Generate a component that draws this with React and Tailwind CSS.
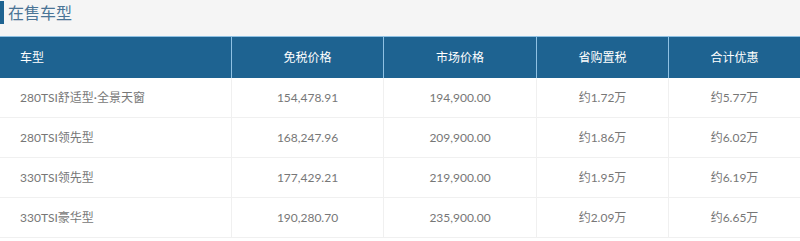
import React from 'react';

const rows = [
  ['280TSI舒适型·全景天窗', '154,478.91', '194,900.00', '约1.72万', '约5.77万'],
  ['280TSI领先型', '168,247.96', '209,900.00', '约1.86万', '约6.02万'],
  ['330TSI领先型', '177,429.21', '219,900.00', '约1.95万', '约6.19万'],
  ['330TSI豪华型', '190,280.70', '235,900.00', '约2.09万', '约6.65万'],
];

const cols = ['w-[232px]', 'w-[152px]', 'w-[153px]', 'w-[132px]', 'flex-1'];

const App = () => {
  return (
    <div
      className="w-[800px] h-[241px] overflow-hidden bg-[#f5f5f5] flex flex-col"
      style={{ fontFamily: 'Lato, "Noto Sans CJK SC", sans-serif' }}
    >
      <div className="h-[36px] shrink-0 flex items-start pt-[1px]">
        <div className="flex items-center h-[23px]">
          <div className="w-[4px] h-[23px] bg-[#1e6391]" />
          <h2 className="ml-[4px] text-[16px] leading-[23px] text-[#4a7496]">在售车型</h2>
        </div>
      </div>
      <div className="flex shrink-0 h-[42px] bg-[#1e6391] border-t border-[#8fc1e3] text-white text-[12px]">
        {['车型', '免税价格', '市场价格', '省购置税', '合计优惠'].map((h, i) => (
          <div
            key={h}
            className={`${cols[i]} flex items-center ${i === 0 ? 'pl-[20px]' : 'justify-center'} ${
              i < 4 ? 'border-r border-[#8fc1e3]' : ''
            }`}
          >
            {h}
          </div>
        ))}
      </div>
      <div className="bg-white flex-1">
        {rows.map((r) => (
          <div key={r[0]} className="flex h-[40px] border-b border-[#f0f0f0] text-[12px] text-[#777]">
            {r.map((c, i) => (
              <div
                key={i}
                className={`${cols[i]} flex items-center ${i === 0 ? 'pl-[20px]' : 'justify-center'} ${
                  i < 4 ? 'border-r border-[#f0f0f0]' : ''
                }`}
              >
                {c}
              </div>
            ))}
          </div>
        ))}
      </div>
    </div>
  );
};

export default App;
